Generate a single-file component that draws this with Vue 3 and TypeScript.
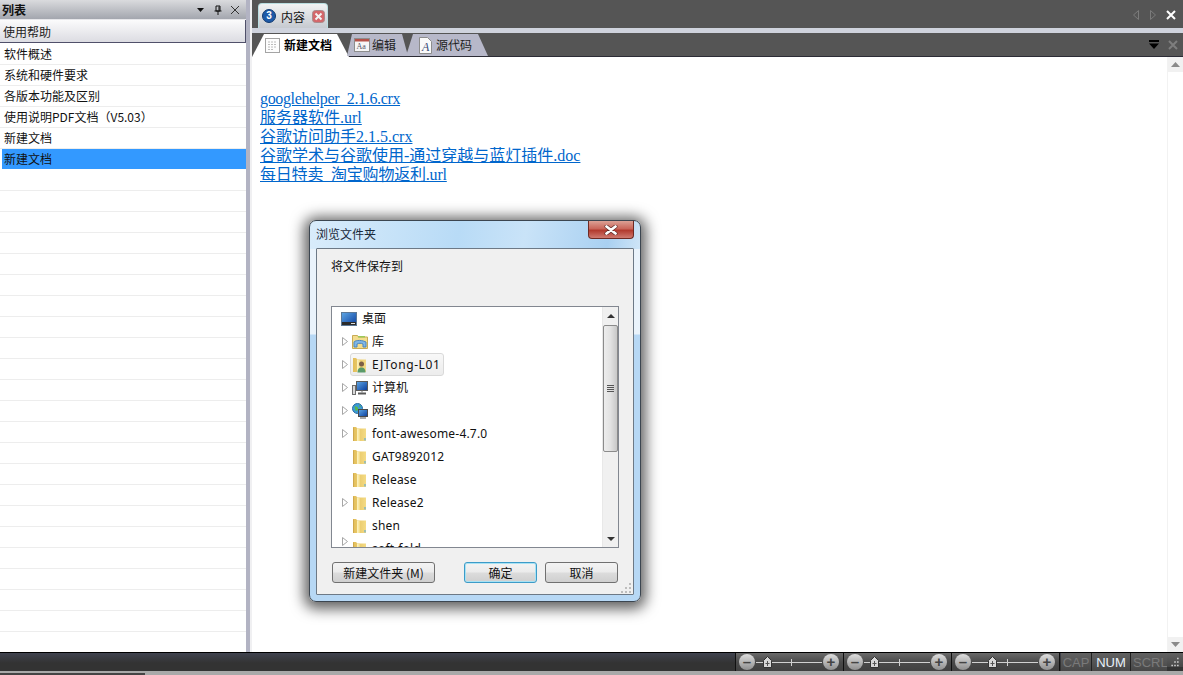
<script setup lang="ts">
  type TreeRow = { label: string; icon: string; arrow: boolean; hover?: boolean; cut?: boolean; cjk?: boolean }

  const listRows = ['软件概述', '系统和硬件要求', '各版本功能及区别', '使用说明PDF文档（V5.03）', '新建文档', '新建文档']
  const blankRows = Array.from({ length: 23 }, (_, i) => i)

  const links = [
    { text: 'googlehelper_2.1.6.crx', fit: 'tight' },
    { text: '服务器软件.url', fit: '' },
    { text: '谷歌访问助手2.1.5.crx', fit: '' },
    { text: '谷歌学术与谷歌使用-通过穿越与蓝灯插件.doc', fit: '' },
    { text: '每日特卖_淘宝购物返利.url', fit: 'narrow' },
  ]

  const treeRows: TreeRow[] = [
    { label: '库', icon: 'library', arrow: true, cjk: true },
    { label: 'EJTong-L01', icon: 'user', arrow: true, hover: true },
    { label: '计算机', icon: 'computer', arrow: true, cjk: true },
    { label: '网络', icon: 'network', arrow: true, cjk: true },
    { label: 'font-awesome-4.7.0', icon: 'folder', arrow: true },
    { label: 'GAT9892012', icon: 'folder', arrow: false },
    { label: 'Release', icon: 'folder', arrow: false },
    { label: 'Release2', icon: 'folder', arrow: true },
    { label: 'shen', icon: 'folder', arrow: false },
    { label: 'soft-fold', icon: 'folder', arrow: true, cut: true },
  ]

  // thumb / tick offsets inside each 108px zoom slider
  const sliders = [
    { thumb: 31, tick: 55 },
    { thumb: 30, tick: 55 },
    { thumb: 40, tick: 55 },
  ]
</script>

<template>
  <div class="app">
    <svg class="defs" width="0" height="0">
      <defs>
        <linearGradient id="folderFill" x1="0" y1="0" x2="1" y2="0">
          <stop offset="0" stop-color="#fdf4c4" />
          <stop offset="0.5" stop-color="#f8e59a" />
          <stop offset="1" stop-color="#e8c765" />
        </linearGradient>
        <linearGradient id="folderBack" x1="0" y1="0" x2="1" y2="0">
          <stop offset="0" stop-color="#e2bd58" />
          <stop offset="1" stop-color="#f4db85" />
        </linearGradient>
        <linearGradient id="screenFill" x1="0" y1="0" x2="1" y2="1">
          <stop offset="0" stop-color="#5fa8e6" />
          <stop offset="1" stop-color="#0a3c9c" />
        </linearGradient>
      </defs>
    </svg>

    <div class="main">
      <aside class="side">
        <div class="side-head">
          <span class="side-title">列表</span>
          <svg class="side-ico" width="10" height="8" viewBox="0 0 10 8"><path d="M1 2h7L4.500 6z" fill="#111" /></svg>
          <svg class="side-ico" width="10" height="10" viewBox="0 0 10 10">
            <path d="M3 1h4v5H3zM1.500 6h7M5 6v4M6 1.500v4" fill="none" stroke="#111" />
          </svg>
          <svg class="side-ico" width="10" height="10" viewBox="0 0 10 10">
            <path d="M1 1l8 8M9 1l-8 8" stroke="#333" fill="none" />
          </svg>
        </div>
        <div class="side-sub">使用帮助</div>
        <div class="side-list">
          <div
            v-for="(row, idx) in listRows"
            :key="idx"
            class="side-row"
            :class="{ selected: idx === listRows.length - 1 }"
          >
            {{ row }}
          </div>
          <div v-for="i in blankRows" :key="'b' + i" class="side-row"></div>
        </div>
      </aside>

      <div class="splitter"></div>

      <section class="content">
        <div class="top-bar">
          <div class="top-tab">
            <span class="num-badge">3</span>
            <span class="top-tab-text">内容</span>
            <svg class="top-tab-close" width="13" height="13" viewBox="0 0 13 13">
              <rect x="0.500" y="0.500" width="12" height="12" rx="3" fill="#d4676a" stroke="#a98a8b" />
              <path d="M3.500 3.500l6 6M9.500 3.500l-6 6" stroke="#f3f3f3" stroke-width="2" />
            </svg>
          </div>
          <div class="top-tools">
            <svg width="8" height="12" viewBox="0 0 8 12"><path d="M6.500 1.500v9L1.500 6z" fill="none" stroke="#7b7b7b" /></svg>
            <svg width="8" height="12" viewBox="0 0 8 12"><path d="M1.500 1.500v9l5-4.500z" fill="none" stroke="#7b7b7b" /></svg>
            <svg width="10" height="10" viewBox="0 0 10 10"><path d="M1 1l8 8M9 1l-8 8" stroke="#fff" stroke-width="2" /></svg>
          </div>
        </div>
        <div class="strip"></div>
        <div class="doc-bar">
          <div class="doc-tab active">
            <svg width="15" height="15" viewBox="0 0 15 15">
              <rect x="0.500" y="0.500" width="14" height="14" fill="#fdfdfd" stroke="#a4a4a4" />
              <path d="M3 4h9M3 6.500h9M3 9h9M3 11.500h6" stroke="#bcbcbc" stroke-dasharray="2 1" />
            </svg>
            <span>新建文档</span>
          </div>
          <div class="doc-tab second">
            <svg width="16" height="14" viewBox="0 0 16 14">
              <rect x="0.500" y="0.500" width="15" height="13" fill="#f6f6f6" stroke="#8d8d8d" />
              <rect x="1" y="1" width="14" height="2.500" fill="#b5524a" />
              <text x="2.500" y="11" class="mini-aa">Aa</text>
            </svg>
            <span>编辑</span>
          </div>
          <div class="doc-tab third">
            <svg width="13" height="17" viewBox="0 0 13 17">
              <path d="M0.500 0.500h8l4 4v12h-12z" fill="#fafafa" stroke="#8d8d8d" />
              <text x="3" y="14" class="mini-a">A</text>
            </svg>
            <span>源代码</span>
          </div>
          <div class="doc-tools">
            <svg width="12" height="10" viewBox="0 0 12 10"><path d="M1 0h10v2H1zM1 3.500h10L6 9z" fill="#000" /></svg>
            <svg width="10" height="10" viewBox="0 0 10 10"><path d="M1 1l8 8M9 1l-8 8" stroke="#7e7e7e" stroke-width="2" /></svg>
          </div>
        </div>

        <div class="doc-body">
          <div class="doc-page">
            <a v-for="link in links" :key="link.text" class="doc-link" :class="link.fit" href="#">{{ link.text }}</a>
          </div>
          <div class="page-scroll">
            <div class="page-btn"><svg width="9" height="5" viewBox="0 0 9 5"><path d="M0 5h9L4.500 0z" fill="#8a8a8a" /></svg></div>
            <div class="page-track"></div>
            <div class="page-btn"><svg width="9" height="5" viewBox="0 0 9 5"><path d="M0 0h9L4.500 5z" fill="#8a8a8a" /></svg></div>
          </div>
        </div>
      </section>
    </div>

    <footer class="status">
      <div class="status-fill"></div>
      <div v-for="(s, idx) in sliders" :key="idx" class="zoom">
        <span class="zoom-btn">–</span>
        <div class="zoom-track">
          <i class="zoom-tick" :style="{ left: s.tick - 20 + 'px' }"></i>
          <svg class="zoom-thumb" :style="{ left: s.thumb - 24 + 'px' }" width="9" height="12" viewBox="0 0 9 12">
            <path d="M0.500 4.500L4.500 0.500l4 4v7h-8z" fill="#d8d8d8" stroke="#333" />
            <path d="M2.500 7.500h4M4.500 5v5" stroke="#555" />
          </svg>
        </div>
        <span class="zoom-btn">+</span>
      </div>
      <span class="pane cap">CAP</span>
      <span class="pane num">NUM</span>
      <span class="pane scrl">SCRL</span>
      <svg class="grip" width="12" height="14" viewBox="0 0 12 14">
        <path d="M9 1h2v2H9zM5 6h2v2H5zM9 6h2v2H9zM1 11h2v2H1zM5 11h2v2H5zM9 11h2v2H9z" fill="#ddd" />
      </svg>
    </footer>
    <div class="under">
      <div class="under-dark"></div>
    </div>

    <!-- folder picker dialog floats over the document -->
    <div class="dialog">
      <div class="dialog-head">
        <span class="dialog-title">浏览文件夹</span>
        <div class="dialog-close">
          <svg width="14" height="10" viewBox="0 0 14 10">
            <path d="M2.500 1.500l9 7M11.500 1.500l-9 7" stroke="#5c2a26" stroke-width="4" stroke-linecap="round" />
            <path d="M2.500 1.500l9 7M11.500 1.500l-9 7" stroke="#fff" stroke-width="2.800" stroke-linecap="round" />
          </svg>
        </div>
      </div>
      <div class="dialog-body">
        <div class="dialog-label">将文件保存到</div>
        <div class="tree">
          <div class="tree-list">
            <div class="tree-row desktop cjk">
              <svg width="16" height="14" viewBox="0 0 16 14">
                <rect x="0.500" y="0.500" width="15" height="13" fill="url(#screenFill)" stroke="#5c7896" />
                <rect x="1" y="10" width="14" height="3" fill="#2b2b2b" />
                <rect x="10" y="11" width="4" height="1" fill="#ddd" />
              </svg>
              <span>桌面</span>
            </div>
            <div v-for="row in treeRows" :key="row.label" class="tree-row" :class="{ cut: row.cut, cjk: row.cjk }">
              <svg class="tree-arrow" :class="{ hidden: !row.arrow }" width="6" height="9" viewBox="0 0 6 9">
                <path d="M0.500 0.500v8l5-4z" fill="#fff" stroke="#a6a6a6" />
              </svg>
              <div class="tree-item" :class="{ hover: row.hover }">
                <svg v-if="row.icon === 'folder'" width="16" height="16" viewBox="0 0 16 16">
                  <path d="M1 1h3l1.500 1.500h8.500V15H1z" fill="url(#folderBack)" />
                  <path d="M5 2.500l4 1V15H5z" fill="url(#folderFill)" />
                  <path d="M1.500 1.500V15" stroke="#cfa94d" />
                  <path d="M13 12v2.500" stroke="#4aa3e0" />
                </svg>
                <svg v-else-if="row.icon === 'library'" width="16" height="16" viewBox="0 0 16 16">
                  <path d="M0.500 1.500h5l1 1.500h9v11.500h-15z" fill="#f4dd8e" stroke="#c9ab55" />
                  <path d="M6 2h7v1.500H6z" fill="#9bc95a" />
                  <path d="M2 13V8c0-1 6-3 12 0v5h-3v-3c-2-1-4-1-6 0v3z" fill="#7fb6e8" stroke="#4d86bd" />
                </svg>
                <svg v-else-if="row.icon === 'user'" width="16" height="16" viewBox="0 0 16 16">
                  <path d="M1 1h3l1.500 1.500h8.500V15H1z" fill="url(#folderBack)" />
                  <path d="M5 2.500l4 1V15H5z" fill="url(#folderFill)" />
                  <circle cx="9.500" cy="7" r="2.500" fill="#7c5f46" />
                  <path d="M5.500 15.500c0-4 2-5 4-5s4 1 4 5z" fill="#5a9a6a" />
                </svg>
                <svg v-else-if="row.icon === 'computer'" width="16" height="16" viewBox="0 0 16 16">
                  <rect x="0.500" y="5.500" width="3" height="9" fill="#d8d8d8" stroke="#6d6d6d" />
                  <rect x="4.500" y="1.500" width="11" height="9" fill="url(#screenFill)" stroke="#5a5a5a" />
                  <path d="M6 13.500h8" stroke="#5a5a5a" stroke-width="2" />
                  <path d="M10 10.500v2" stroke="#777" />
                </svg>
                <svg v-else width="16" height="16" viewBox="0 0 16 16">
                  <circle cx="5.500" cy="5.500" r="5" fill="#3b9ad8" stroke="#2a6ea0" />
                  <path d="M2.500 3l3 1 1 3-3 1zM7 1.500l2 2-1.500 1z" fill="#58b84c" />
                  <rect x="6.500" y="6.500" width="9" height="7" fill="url(#screenFill)" stroke="#4a4a4a" />
                  <path d="M8 15h6" stroke="#555" />
                </svg>
                <span>{{ row.label }}</span>
              </div>
            </div>
          </div>
          <div class="tree-scroll">
            <div class="tree-btn"><svg width="8" height="4" viewBox="0 0 8 4"><path d="M0 4h8L4 0z" fill="#333" /></svg></div>
            <div class="tree-track">
              <div class="tree-thumb">
                <svg width="7" height="7" viewBox="0 0 7 7"><path d="M0 .5h7M0 2.500h7M0 4.500h7M0 6.500h7" stroke="#555" /></svg>
              </div>
            </div>
            <div class="tree-btn"><svg width="8" height="4" viewBox="0 0 8 4"><path d="M0 0h8L4 4z" fill="#333" /></svg></div>
          </div>
        </div>
        <div class="dialog-foot">
          <button class="win-btn new-folder" type="button">新建文件夹 (M)</button>
          <div class="foot-right">
            <button class="win-btn primary" type="button">确定</button>
            <button class="win-btn" type="button">取消</button>
          </div>
        </div>
        <svg class="dialog-grip" width="11" height="11" viewBox="0 0 11 11">
          <path d="M8 0h2v2H8zM4 4h2v2H4zM8 4h2v2H8zM0 8h2v2H0zM4 8h2v2H4zM8 8h2v2H8z" fill="#bdbdbd" />
        </svg>
      </div>
    </div>
  </div>
</template>

<style scoped>
  .app {
    position: relative;
    width: 1183px;
    height: 675px;
    overflow: hidden;
    display: flex;
    flex-direction: column;
    font-family: 'Noto Sans CJK SC', 'Liberation Sans', sans-serif;
    font-size: 12px;
    color: #111;
    background: #fff;
  }

  .defs {
    position: absolute;
  }

  .main {
    height: 653px;
    display: flex;
    border-bottom: 1px solid #000;
    box-sizing: border-box;
  }

  /* left list */
  .side {
    width: 246px;
    display: flex;
    flex-direction: column;
  }

  .side-head {
    height: 19px;
    flex-shrink: 0;
    display: flex;
    align-items: center;
    gap: 7px;
    padding: 0 6px 0 2px;
    background: linear-gradient(#dadbde, #a3a6ae);
    border-bottom: 1px solid #e6e6ea;
  }

  .side-title {
    flex: 1;
    font-weight: 700;
    line-height: 18px;
  }

  .side-ico {
    display: block;
  }

  .side-sub {
    height: 23px;
    line-height: 23px;
    flex-shrink: 0;
    box-sizing: border-box;
    padding-left: 3px;
    background: linear-gradient(#fbfbfc, #dcdce2);
    border-bottom: 1px solid #50506a;
    border-right: 1px solid #50506a;
    margin-bottom: 1px;
    color: #222;
  }

  .side-list {
    flex: 1;
    overflow: hidden;
  }

  .side-row {
    height: 21px;
    line-height: 20px;
    box-sizing: border-box;
    padding-left: 4px;
    border-bottom: 1px solid #ededed;
    white-space: nowrap;
  }

  .side-row.selected {
    margin-left: 2px;
    padding-left: 2px;
    background: #3399ff;
    border-bottom-color: #fff;
  }

  .splitter {
    width: 4px;
    background: #b2b3c3;
  }

  /* right side */
  .content {
    flex: 1;
    min-width: 0;
    display: flex;
    flex-direction: column;
    border-left: 2px solid #f0f0f2;
  }

  .top-bar {
    height: 28px;
    flex-shrink: 0;
    display: flex;
    align-items: flex-end;
    padding-left: 6px;
    background: #555;
  }

  .top-tab {
    width: 70px;
    height: 25px;
    box-sizing: border-box;
    display: flex;
    align-items: center;
    padding: 0 1px 0 3px;
    gap: 5px;
    border-radius: 4px 4px 0 0;
    background: linear-gradient(#f1f2f3, #c6cad0);
    border: 1px solid #b9dde0;
    border-bottom: none;
  }

  .num-badge {
    width: 14px;
    height: 14px;
    border-radius: 50%;
    background: #1d5aa8;
    border: 1px solid #123a70;
    box-sizing: border-box;
    color: #fff;
    font-size: 10px;
    font-weight: 700;
    line-height: 12px;
    text-align: center;
    font-family: 'Liberation Sans', sans-serif;
  }

  .top-tab-text {
    flex: 1;
  }

  .top-tab-close {
    margin-right: 1px;
  }

  .top-tools {
    margin-left: auto;
    height: 28px;
    display: flex;
    align-items: center;
    gap: 9px;
    padding: 2px 7px 0 0;
    box-sizing: border-box;
  }

  .strip {
    height: 5px;
    flex-shrink: 0;
    background: #cfd3dd;
  }

  .doc-bar {
    height: 24px;
    flex-shrink: 0;
    box-sizing: border-box;
    display: flex;
    align-items: flex-end;
    background: #555;
    border-bottom: 1px solid #2c2c36;
  }

  .doc-tab {
    height: 22px;
    display: flex;
    align-items: center;
    box-sizing: border-box;
    background: #b7b8c9;
    color: #222;
  }

  .doc-tab span {
    margin-bottom: 2px;
  }

  .doc-tab.active {
    width: 97px;
    padding-left: 13px;
    gap: 4px;
    height: 23px;
    margin-bottom: -1px;
    background: #fff;
    font-weight: 700;
    color: #000;
    clip-path: polygon(0 100%, 12px 0, 85px 0, 100% 100%);
  }

  .doc-tab.second {
    width: 61px;
    margin-left: -2px;
    padding-left: 7px;
    gap: 2px;
    clip-path: polygon(0 100%, 5px 0, 55px 0, 100% 100%);
  }

  .doc-tab.third {
    width: 82px;
    margin-left: -2px;
    padding-left: 13px;
    gap: 4px;
    clip-path: polygon(0 100%, 7px 0, 72px 0, 100% 100%);
  }

  .mini-aa,
  .mini-a {
    font-family: 'Liberation Serif', serif;
    font-size: 8px;
    fill: #556;
  }

  .mini-a {
    font-size: 12px;
    fill: #3a4a78;
    font-style: italic;
  }

  .doc-tools {
    margin-left: auto;
    height: 22px;
    display: flex;
    align-items: center;
    gap: 8px;
    padding-right: 5px;
  }

  .doc-body {
    flex: 1;
    min-height: 0;
    display: flex;
  }

  .doc-page {
    flex: 1;
    padding: 32px 0 0 8px;
    display: flex;
    flex-direction: column;
    align-items: flex-start;
  }

  .doc-link {
    font-family: 'Liberation Serif', 'Noto Sans CJK SC', serif;
    font-size: 16px;
    line-height: 19px;
    height: 19px;
    color: #0066cc;
    text-decoration: underline;
    white-space: nowrap;
  }

  .doc-link.tight {
    letter-spacing: -0.36px;
  }

  .doc-link.narrow {
    letter-spacing: -0.2px;
  }

  .page-scroll {
    width: 15px;
    display: flex;
    flex-direction: column;
    border-left: 1px solid #f2f2f2;
  }

  .page-btn {
    height: 15px;
    display: flex;
    align-items: center;
    justify-content: center;
    background: #f1f1f1;
  }

  .page-track {
    flex: 1;
  }

  /* status bar */
  .status {
    height: 18px;
    flex-shrink: 0;
    display: flex;
    align-items: stretch;
    background: linear-gradient(#40434f, #333 55%, #333);
  }

  .status-fill {
    width: 736px;
    border-right: 1px solid #111;
    box-sizing: border-box;
  }

  .zoom {
    width: 108px;
    box-sizing: border-box;
    display: flex;
    align-items: center;
    padding: 0 4px 0 3px;
    border-right: 1px solid #111;
    background: linear-gradient(#6a6a6a, #4a4a4a 50%, #404040);
  }

  .zoom-btn {
    width: 16px;
    height: 16px;
    flex-shrink: 0;
    border-radius: 50%;
    background: linear-gradient(#dedede, #8f8f8f);
    color: #444;
    font-family: 'Liberation Sans', sans-serif;
    font-weight: 700;
    font-size: 15px;
    line-height: 15px;
    text-align: center;
  }

  .zoom-track {
    position: relative;
    flex: 1;
    height: 1px;
    margin: 0 1px;
    background: #d0d0d0;
  }

  .zoom-tick {
    position: absolute;
    top: -3px;
    width: 1px;
    height: 7px;
    background: #d0d0d0;
  }

  .zoom-thumb {
    position: absolute;
    top: -6px;
  }

  .pane {
    font-family: 'Liberation Sans', sans-serif;
    font-size: 13px;
    line-height: 19px;
    text-align: center;
    background: linear-gradient(#616161, #474747);
    border-right: 1px solid #222;
    box-sizing: border-box;
    color: #7a7a7a;
  }

  .cap {
    width: 31px;
    margin-left: 1px;
  }

  .num {
    width: 39px;
    color: #e9f2fb;
  }

  .scrl {
    width: 36px;
    border-right: none;
    text-align: left;
    padding-left: 2px;
  }

  .grip {
    flex: 1;
    background: linear-gradient(#616161, #474747);
    padding-top: 4px;
    box-sizing: border-box;
    min-width: 0;
  }

  .under {
    height: 4px;
    background: #a9a9a9;
  }

  .under-dark {
    width: 145px;
    height: 2px;
    margin: 2px 0 0 0;
    background: #444;
  }

  /* dialog */
  .dialog {
    position: absolute;
    left: 309px;
    top: 220px;
    width: 332px;
    height: 382px;
    box-sizing: border-box;
    display: flex;
    flex-direction: column;
    padding: 0 6px 6px;
    border-radius: 7px;
    border: 1px solid #3c4650;
    background:
      linear-gradient(100deg, #d9ecfb 0%, #b8dbf6 45%, #c9e3f8 65%, #a9d0f1 90%, #cfe5f7 100%) top / 100% 28px no-repeat,
      linear-gradient(#eaf3fb 0, #eaf3fb 113px, #b7d8f5 114px, #b7d8f5 100%);
    box-shadow: 0 2px 14px 5px rgba(0, 0, 0, 0.62);
  }

  .dialog-head {
    height: 27px;
    flex-shrink: 0;
    display: flex;
    justify-content: space-between;
  }

  .dialog-title {
    line-height: 26px;
    color: #1a2a3a;
  }

  .dialog-close {
    width: 46px;
    height: 18px;
    box-sizing: border-box;
    display: flex;
    align-items: center;
    justify-content: center;
    border: 1px solid #6e2a24;
    border-top: none;
    border-radius: 0 0 4px 4px;
    background: linear-gradient(#dca195, #c9665a 45%, #b23a2e 55%, #cf7a70);
  }

  .dialog-body {
    position: relative;
    flex: 1;
    box-sizing: border-box;
    display: flex;
    flex-direction: column;
    padding: 0 14px;
    background: #f0f0f0;
    border: 1px solid #6d7986;
    border-radius: 1px;
  }

  .dialog-label {
    height: 57px;
    line-height: 34px;
    flex-shrink: 0;
  }

  .dialog-grip {
    position: absolute;
    right: 1px;
    bottom: 0;
  }

  .tree {
    height: 242px;
    flex-shrink: 0;
    box-sizing: border-box;
    display: flex;
    background: #fff;
    border: 1px solid #828790;
  }

  .tree-list {
    flex: 1;
    min-width: 0;
    overflow: hidden;
    font-family: 'Noto Sans', 'Noto Sans CJK SC', sans-serif;
    letter-spacing: 0.2px;
  }

  .tree-row {
    height: 23px;
    display: flex;
    align-items: center;
    padding-left: 10px;
    white-space: nowrap;
  }

  .tree-row.cjk span {
    margin-bottom: 2px;
    letter-spacing: 0;
  }

  .tree-row.desktop {
    padding-left: 9px;
    gap: 5px;
  }

  .tree-row.cut {
    height: 12px;
    align-items: flex-start;
    overflow: hidden;
  }

  .tree-arrow {
    flex-shrink: 0;
    margin-right: 2px;
  }

  .tree-arrow.hidden {
    visibility: hidden;
  }

  .tree-item {
    height: 23px;
    display: flex;
    align-items: center;
    gap: 4px;
    box-sizing: border-box;
    padding-left: 1px;
    border: 1px solid transparent;
    padding-right: 3px;
    border-radius: 3px;
  }

  .tree-item.hover {
    background: linear-gradient(#f8f8f8, #ececec);
    border-color: #d9d9d9;
  }

  .tree-item.hover span {
    letter-spacing: 0.6px;
  }

  .tree-scroll {
    width: 16px;
    flex-shrink: 0;
    display: flex;
    flex-direction: column;
    background: #f0f0f0;
    border-left: 1px solid #e8e8e8;
    box-sizing: border-box;
  }

  .tree-btn {
    height: 17px;
    flex-shrink: 0;
    display: flex;
    align-items: center;
    justify-content: center;
  }

  .tree-track {
    flex: 1;
  }

  .tree-thumb {
    height: 127px;
    margin-top: 1px;
    box-sizing: border-box;
    display: flex;
    align-items: center;
    justify-content: center;
    border: 1px solid #8b8b8b;
    border-radius: 2px;
    background: linear-gradient(90deg, #ededed, #e2e2e2 50%, #c8c8c8);
  }

  .dialog-foot {
    display: flex;
    justify-content: space-between;
    margin-top: 14px;
    padding: 0 1px;
  }

  .foot-right {
    display: flex;
    gap: 8px;
  }

  .win-btn {
    width: 73px;
    height: 21px;
    padding: 0;
    border: 1px solid #707070;
    border-radius: 3px;
    background: linear-gradient(#f3f3f3, #ebebeb 48%, #dcdcdc 52%, #cfcfcf);
    font: inherit;
    line-height: 18px;
    color: #111;
  }

  .win-btn.new-folder {
    width: 103px;
  }

  .win-btn.primary {
    border-color: #3c9bc8;
    box-shadow: inset 0 0 0 1px #a8e2f4;
  }
</style>

<style>
  html,
  body {
    margin: 0;
    background: #fff;
  }
</style>
